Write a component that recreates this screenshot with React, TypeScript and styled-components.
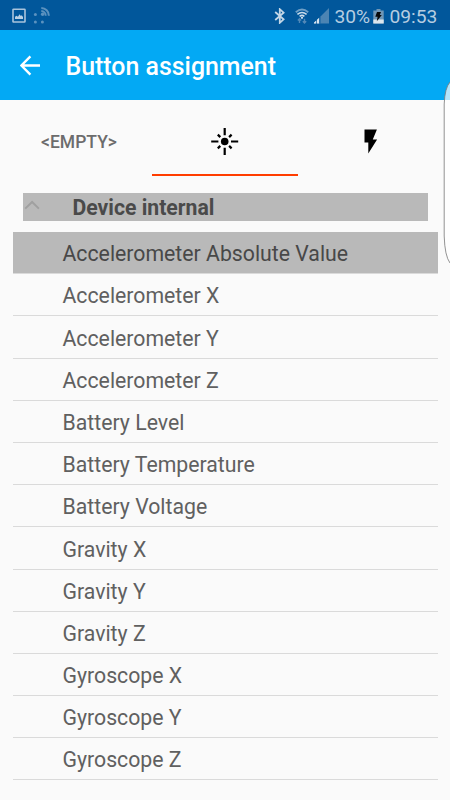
import React from "react";
import styled, { createGlobalStyle } from "styled-components";

const GlobalStyle = createGlobalStyle`
  * { box-sizing: border-box; }
  html, body { margin: 0; background: #fafafa; overflow: hidden; }
  body { font-family: Roboto, "Liberation Sans", sans-serif; }
`;

const Screen = styled.main`
  position: relative;
  width: 450px;
  height: 800px;
  overflow: hidden;
  background: #fafafa;
`;

const StatusBar = styled.div`
  display: flex;
  align-items: center;
  height: 30px;
  padding: 2px 13px 0 12px;
  background: #01579b;
  color: #b6cde1;
  font-size: 19.2px;
`;

const StatusGroup = styled.div<{ $end?: boolean }>`
  display: flex;
  align-items: center;
  height: 28px;
  margin-left: ${(p) => (p.$end ? "auto" : "0")};
`;

const StatusText = styled.span<{ $left: number; $width: number }>`
  margin-left: ${(p) => p.$left}px;
  width: ${(p) => p.$width}px;
  padding-top: 2px;
  line-height: 26px;
  white-space: nowrap;
`;

const Glyph = styled.svg<{ $left?: number; $bottom?: number }>`
  display: block;
  flex: none;
  margin-left: ${(p) => p.$left ?? 0}px;
  margin-bottom: ${(p) => p.$bottom ?? 0}px;
`;

const AppBar = styled.header`
  display: flex;
  align-items: center;
  height: 70px;
  padding: 0 0 0 20px;
  background: #03a9f4;
  color: #fff;
`;

const Title = styled.h1`
  margin: 0 0 0 24.5px;
  padding-top: 4px;
  font-size: 24.9px;
  font-weight: 500;
  line-height: 30px;
  white-space: nowrap;
`;

const Tabs = styled.nav`
  display: grid;
  grid-template-columns: repeat(3, 146px);
  height: 76px;
  margin-left: 6px;
`;

const Tab = styled.div<{ $active?: boolean }>`
  display: flex;
  align-items: center;
  justify-content: center;
  padding-top: 10px;
  border-bottom: 2px solid ${(p) => (p.$active ? "#ff3d00" : "transparent")};
  color: #6c6c6c;
  font-size: 17.5px;
  font-weight: 500;
`;

const GroupHeader = styled.div`
  display: flex;
  align-items: center;
  height: 28.5px;
  margin: 16.5px 22.5px 11px;
  padding: 2px 0 0 1.5px;
  background: #b9b9b9;
  color: #4a4a4a;
  font-size: 21.2px;
  font-weight: 700;
`;

const GroupName = styled.span`
  margin-left: 32.5px;
  white-space: nowrap;
`;

const List = styled.ul`
  list-style: none;
  margin: 0 12.5px;
  padding: 0;
`;

const Row = styled.li<{ $selected?: boolean }>`
  display: flex;
  align-items: center;
  height: 42.19px;
  padding: 2.2px 0 0 50px;
  border-bottom: 1px solid #dadada;
  background: ${(p) => (p.$selected ? "#b9b9b9" : "transparent")};
  color: ${(p) => (p.$selected ? "#484848" : "#606060")};
  font-size: 21.25px;
  white-space: nowrap;
`;

const EdgeHandle = styled.svg`
  position: absolute;
  right: 0;
  top: 78px;
`;

const sensors = [
  "Accelerometer Absolute Value",
  "Accelerometer X",
  "Accelerometer Y",
  "Accelerometer Z",
  "Battery Level",
  "Battery Temperature",
  "Battery Voltage",
  "Gravity X",
  "Gravity Y",
  "Gravity Z",
  "Gyroscope X",
  "Gyroscope Y",
  "Gyroscope Z",
];

const PictureIcon = () => (
  <Glyph width="14" height="16" viewBox="0 0 14 16">
    <rect x="1" y="1.2" width="12" height="12.8" rx="0.6" fill="none" stroke="#a9c4dc" strokeWidth="1.6" />
    <path d="M3 11V8.7l1.6-1 1.3 1L7.6 6.2l1.2 1.7 1-.7L11 9v2z" fill="#b9d0e4" />
  </Glyph>
);

const SmartThingsIcon = () => (
  <Glyph $left={7} $bottom={4} width="18" height="20" viewBox="0 0 18 20" fill="#5c92bf">
    <circle cx="2.4" cy="10.5" r="1.5" />
    <circle cx="2.4" cy="18" r="1.5" />
    <circle cx="9.4" cy="18" r="1.5" />
    <circle cx="9.6" cy="10.3" r="1.7" />
    <path
      d="M8.3 7.1a4.6 4.6 0 0 1 4.4 4.6M8.3 3.9a7.8 7.8 0 0 1 7.6 7.8"
      fill="none"
      stroke="#5c92bf"
      strokeWidth="2"
    />
  </Glyph>
);

const BluetoothIcon = () => (
  <Glyph width="12" height="16" viewBox="0 0 12 16">
    <path d="M1.2 4 9.6 11.3 5.8 14.8V1.2l3.8 3.5L1.2 12" fill="none" stroke="#c3d6e6" strokeWidth="1.8" />
  </Glyph>
);

const WifiIcon = () => (
  <Glyph $left={9} width="14" height="16" viewBox="0 0 14 16" fill="none">
    <path d="M.8 4.2Q7-1 13.2 4.2" stroke="#6f9fc6" strokeWidth="1.9" />
    <path d="M2.4 6.4Q7 2.6 11.6 6.4M4.6 8.4Q7 6.4 9.4 8.4" stroke="#cbdceb" strokeWidth="1.5" />
    <circle cx="7" cy="9.8" r="1.1" fill="#d4e2ee" />
    <path d="M4.5 15v-4M2.8 12.4l1.7-1.7 1.7 1.7M9.5 10.7v4M7.8 13.2l1.7 1.7 1.7-1.7" stroke="#5388b7" strokeWidth="1.4" />
  </Glyph>
);

const SignalIcon = () => (
  <Glyph $left={4} width="17" height="16" viewBox="0 0 17 16">
    <path d="M16 0v15.5H.5z" fill="#4b84b3" />
    <path d="M1 15.5v-1l2-1.8v2.8zM4 15.5v-3.8l2.2-2v5.8z" fill="#d7e5f0" />
    <path d="M6.9 15.5V9" stroke="#01579b" />
  </Glyph>
);

const BatteryIcon = () => (
  <Glyph width="11" height="15" viewBox="0 0 11 15">
    <path d="M3.5 0h4v1.5H10.7V14.5H.3V1.5h3.2z" fill="#7197b6" />
    <path d="M.3 10.5h10.4v4H.3z" fill="#dbe6ee" />
    <path d="M4 3h4L6.8 6h2L3.8 12.2l.8-4.5H2.3z" fill="#090909" />
  </Glyph>
);

const BackIcon = () => (
  <Glyph width="21" height="21" viewBox="0 0 21 21">
    <path d="M20 10.5H2M10.4 1.3 1.4 10.5l9 9.1" fill="none" stroke="#fff" strokeWidth="2.4" />
  </Glyph>
);

const SensorIcon = () => (
  <Glyph width="28" height="28" viewBox="0 0 28 28">
    <circle cx="13.7" cy="13.5" r="3.8" />
    <path
      d="M13.7 0v7.2M13.7 19.8v7.2M.2 13.5h7.2M20 13.5h7.2M6.8 6.6l2.5 2.5M18.1 17.9l2.5 2.5M20.6 6.6l-2.5 2.5M9.3 17.9l-2.5 2.5"
      fill="none"
      stroke="#000"
      strokeWidth="2.2"
    />
  </Glyph>
);

const BoltIcon = () => (
  <Glyph width="14" height="26" viewBox="0 0 14 26">
    <path d="M.5 .5h12.4L8.8 10.5h4.3L4.3 24.5V13.5H.5z" />
  </Glyph>
);

const CollapseIcon = () => (
  <Glyph $bottom={5} width="16" height="10" viewBox="0 0 16 10">
    <path d="M1.2 8.6 8.1 2l6.8 6.6" fill="none" stroke="#a0a0a0" strokeWidth="2" />
  </Glyph>
);

export default function App() {
  return (
    <>
      <GlobalStyle />
      <Screen>
        <StatusBar>
          <StatusGroup>
            <PictureIcon />
            <SmartThingsIcon />
          </StatusGroup>
          <StatusGroup $end>
            <BluetoothIcon />
            <WifiIcon />
            <SignalIcon />
            <StatusText $left={4.5} $width={38.5}>30%</StatusText>
            <BatteryIcon />
            <StatusText $left={5.5} $width={47.5}>09:53</StatusText>
          </StatusGroup>
        </StatusBar>
        <AppBar>
          <BackIcon />
          <Title>Button assignment</Title>
        </AppBar>
        <Tabs>
          <Tab>&lt;EMPTY&gt;</Tab>
          <Tab $active>
            <SensorIcon />
          </Tab>
          <Tab>
            <BoltIcon />
          </Tab>
        </Tabs>
        <GroupHeader>
          <CollapseIcon />
          <GroupName>Device internal</GroupName>
        </GroupHeader>
        <List>
          {sensors.map((name, i) => (
            <Row key={name} $selected={i === 0}>
              {name}
            </Row>
          ))}
        </List>
        <EdgeHandle width="7" height="188" viewBox="0 0 7 188">
          <path d="M7 4Q1.8 10 1.2 26V158Q1.8 178 7 185z" fill="#fff" fillOpacity="0.7" />
          <path d="M7 4Q1.8 10 1.2 26V158Q1.8 178 7 185" fill="none" stroke="#777" strokeWidth="0.8" />
        </EdgeHandle>
      </Screen>
    </>
  );
}
